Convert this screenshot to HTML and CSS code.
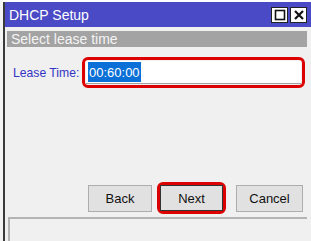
FILE: index.html
```html
<!DOCTYPE html>
<html lang="en">
<head>
  <meta charset="UTF-8">
  <title>DHCP Setup</title>
<link rel="stylesheet" href="styles.css">
</head>
<body>
  <div class="edge"></div>
  <div class="window">
    <div class="titlebar">
      <span class="title">DHCP Setup</span>
      <span class="tbtn">
        <svg width="12" height="12" viewBox="0 0 12 12"><rect x="1.5" y="1.5" width="9" height="9" fill="none" stroke="#111" stroke-width="1.6"/></svg>
      </span>
      <span class="tbtn">
        <svg width="12" height="12" viewBox="0 0 12 12"><path d="M2 2 L10 10 M10 2 L2 10" stroke="#111" stroke-width="2.2"/></svg>
      </span>
    </div>
    <div class="content">
      <div class="banner">Select lease time</div>
      <div class="row">
        <label>Lease Time:</label>
        <div class="hilite">
          <div class="field"><span class="sel">00:60:00</span></div>
        </div>
      </div>
      <div class="spacer"></div>
      <div class="buttons">
        <button>Back</button>
        <div class="hilite btnwrap"><button>Next</button></div>
        <button class="cancel">Cancel</button>
      </div>
      <div class="status"></div>
    </div>
  </div>
</body>
</html>
```

FILE: styles.css
```css
* {
  margin: 0;
  padding: 0;
  box-sizing: border-box;
}
html, body {
  height: 241px;
  overflow: hidden;
}
body {
  display: flex;
  background: #fff;
  font-family: "Liberation Sans", Arial, sans-serif;
  font-size: 13px;
}
.edge {
  width: 3px;
  background: #f4f4f4;
}
.window {
  flex: 1;
  display: flex;
  flex-direction: column;
  border-left: 2px solid #3a3a3a;
  background: #f0f0f0;
  margin-top: 2px;
}
.titlebar {
  height: 25px;
  background: #4a4ac6;
  display: flex;
  align-items: center;
  padding: 0 4px 0 4px;
  gap: 2px;
}
.title {
  flex: 1;
  color: #fff;
  font-size: 14px;
  padding-top: 1px;
}
.tbtn {
  width: 17px;
  height: 16px;
  background: #fff;
  border: 1px solid #222;
  display: flex;
  align-items: center;
  justify-content: center;
}
.content {
  flex: 1;
  display: flex;
  flex-direction: column;
  padding: 4px 4px 0 2px;
}
.banner {
  height: 16px;
  background: #a3a3a3;
  color: #f4f4f4;
  font-size: 14px;
  line-height: 16px;
  padding-left: 4px;
}
.row {
  display: flex;
  align-items: center;
  margin-top: 10px;
  padding-left: 6px;
  padding-right: 2px;
}
label {
  color: #3434c4;
  font-size: 12.2px;
  width: 69px;
  flex-shrink: 0;
  white-space: nowrap;
}
.hilite {
  border: 3px solid #dd0000;
  border-radius: 6px;
  padding: 1px;
}
.row .hilite {
  flex: 1;
}
.field {
  height: 23px;
  background: #fff;
  border-bottom: 1px solid #a0a0a0;
  padding: 1px 1px 1px 2px;
  display: flex;
}
.sel {
  background: #0a6fd6;
  color: #fff;
  font-size: 13px;
  line-height: 21px;
  padding: 0 1px;
}
.spacer {
  flex: 1;
}
.buttons {
  display: flex;
  align-items: center;
  justify-content: flex-end;
  padding-right: 4px;
}
button {
  width: 64px;
  height: 27px;
  background: #e1e1e1;
  border: 1px solid #adadad;
  font-family: "Liberation Sans", Arial, sans-serif;
  font-size: 13px;
  color: #111;
}
.btnwrap {
  padding: 0;
  margin: 0 10px 0 5px;
}
.btnwrap button {
  width: 63px;
  height: 26px;
  border-color: #333;
}
.cancel {
  width: 67px;
}
.status {
  height: 24px;
  margin-top: 3px;
  border-top: 2px solid #b4b4b4;
  border-left: 2px solid #b4b4b4;
  margin-left: 1px;
}
```
